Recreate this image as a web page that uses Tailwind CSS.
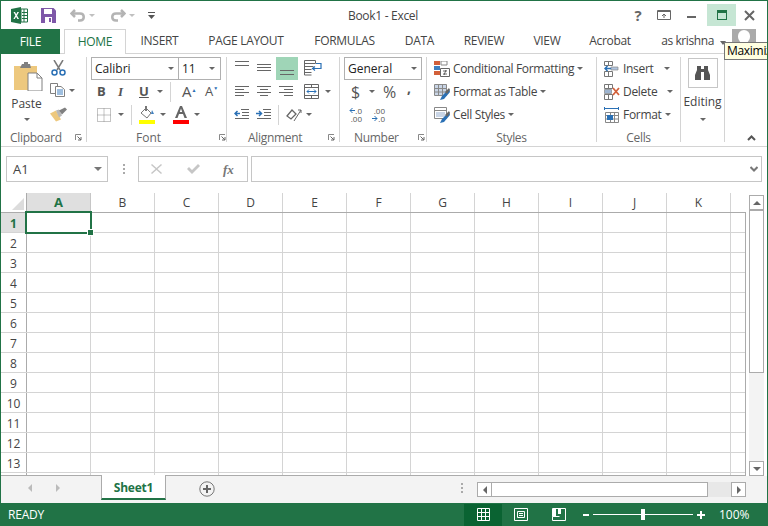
<!DOCTYPE html>
<html lang="en">
<head>
<meta charset="UTF-8">
<title>Book1 - Excel</title>
<script src="https://cdn.jsdelivr.net/npm/@tailwindcss/browser@4"></script>
</head>
<body class="m-0 overflow-hidden bg-white">
<div class="relative flex flex-col w-[768px] h-[526px] overflow-hidden bg-white text-[#444] text-[12px] leading-none font-['Open_Sans','Noto_Sans',sans-serif] border-t border-l border-r border-[#217346]">

  <!-- title bar -->
  <div class="flex items-center h-[28px] shrink-0">
    <svg class="ml-[10px] w-[17px] h-[17px]" viewBox="0 0 17 17"><path d="M0 2 10 0v17L0 15z" fill="#217346"/><path d="M10 2h6.500v13H10z" fill="#fff" stroke="#217346"/><path d="M11 5.500h5M11 8.500h5M11 11.500h5M13 2v13" stroke="#217346"/><path d="M2.500 5 4 5l1.200 2.200L6.400 5H8L6 8.500 8 12H6.400L5.100 9.700 3.800 12H2.400l2-3.500z" fill="#fff"/></svg>
    <svg class="ml-[13px] w-[15px] h-[15px]" viewBox="0 0 15 15"><path d="M0 0h12.500L15 2.500V15H0z" fill="#7e57a8"/><path d="M3 1h8v5H3z" fill="#fff"/><path d="M4 9h7v6H4z" fill="#fff"/><path d="M8 10h2v4H8z" fill="#7e57a8"/></svg>
    <svg class="ml-[14px] w-[16px] h-[14px]" viewBox="0 0 16 14" fill="none"><path d="M5 2 1.500 5.500 5 9" stroke="#b4b4b4" stroke-width="2.500"/><path d="M2 5.500h8c5 0 5 7 0 7H8" stroke="#b4b4b4" stroke-width="2.500"/></svg>
    <span class="ml-[3px] w-0 h-0 border-x-[3px] border-x-transparent border-t-[3px] border-t-[#c0c0c0]"></span>
    <svg class="ml-[15px] w-[16px] h-[14px]" viewBox="0 0 16 14" fill="none"><path d="M11 2l3.500 3.500L11 9" stroke="#b4b4b4" stroke-width="2.500"/><path d="M14 5.500H6c-5 0-5 7 0 7h2" stroke="#b4b4b4" stroke-width="2.500"/></svg>
    <span class="ml-[3px] w-0 h-0 border-x-[3px] border-x-transparent border-t-[3px] border-t-[#c0c0c0]"></span>
    <svg class="ml-[13px] w-[7px] h-[7px] mt-[1px]" viewBox="0 0 7 7"><path d="M0 0h7v1H0zM0 3h7L3.500 7z" fill="#555"/></svg>
    <span class="ml-[193px] mt-[2px] w-[70px] text-center whitespace-nowrap tracking-[-0.3px]">Book1 - Excel</span>
    <span class="ml-[215px] w-[10px] text-center text-[15px] font-bold text-[#666]">?</span>
    <svg class="ml-[14px] w-[14px] h-[10px]" viewBox="0 0 14 10" fill="none"><path d="M.5.500h13v9H.5z" stroke="#666"/><path d="M1 1.500h12" stroke="#666"/><path d="M7 8V4M5 6l2-2 2 2" stroke="#666"/></svg>
    <span class="ml-[16px] w-[9px] h-[2px] mt-[3px] bg-[#666]"></span>
    <div class="ml-[11px] flex items-center justify-center w-[29px] h-[22px] bg-[#c6e6d4]">
      <span class="w-[10px] h-[10px] border border-[#217346] border-t-[3px]"></span>
    </div>
    <svg class="ml-[8px] w-[11px] h-[11px]" viewBox="0 0 11 11"><path d="M1 1l9 9M10 1l-9 9" stroke="#666" stroke-width="2"/></svg>
  </div>

  <!-- tabs -->
  <div class="relative flex h-[25px] shrink-0 border-b border-[#d4d4d4] tracking-[-0.3px]">
    <div class="flex items-center justify-center w-[59px] h-[25px] bg-[#217346] text-white">FILE</div>
    <div class="flex items-center justify-center ml-[4px] w-[62px] h-[25px] bg-white border border-b-0 border-[#d4d4d4] text-[#217346]">HOME</div>
    <div class="flex items-center justify-center w-[67px]">INSERT</div>
    <div class="flex items-center justify-center w-[106px]">PAGE LAYOUT</div>
    <div class="flex items-center justify-center w-[91px]">FORMULAS</div>
    <div class="flex items-center justify-center w-[59px]">DATA</div>
    <div class="flex items-center justify-center w-[70px]">REVIEW</div>
    <div class="flex items-center justify-center w-[56px]">VIEW</div>
    <div class="flex items-center justify-center w-[70px]">Acrobat</div>
    <div class="flex items-center justify-end w-[69px] whitespace-nowrap tracking-[-0.4px]">as krishna</div>
    <span class="ml-[6px] mt-[12px] w-0 h-0 border-x-[3px] border-x-transparent border-t-[4px] border-t-[#666]"></span>
    <div class="ml-[6px] w-[24px] h-[24px] bg-[#aaa] flex justify-center overflow-hidden"><span class="mt-[1px] w-[12px] h-[13px] rounded-full bg-white"></span></div>
  </div>

  <!-- ribbon -->
  <div class="flex h-[93px] shrink-0 border-b border-[#d4d4d4]">

    <!-- clipboard -->
    <div class="flex flex-col w-[86px] h-[85px] mt-[3px] border-r border-[#d4d4d4]">
      <div class="flex h-[76px]">
        <div class="flex flex-col items-center w-[47px] pl-[4px]">
          <svg class="mt-[5px] ml-[3px] w-[29px] h-[29px]" viewBox="0 0 29 29"><path d="M0 4h23v24H0z" fill="#edc87e"/><path d="M8 2h2V0h4v2h2l1 4H6z" fill="#808080"/><path d="M14 11h9l5 5v13H14z" fill="#fff" stroke="#808080"/><path d="M23 11v5h5" fill="none" stroke="#808080"/></svg>
          <span class="mt-[7px]">Paste</span>
          <span class="mt-[8px] w-0 h-0 border-x-[3px] border-x-transparent border-t-[3px] border-t-[#666]"></span>
        </div>
        <div class="flex flex-col">
          <svg class="ml-[3px] mt-[3px] w-[15px] h-[16px]" viewBox="0 0 15 16" fill="none"><path d="M3 0l6 10M12 0 6 10" stroke="#7a7a7a" stroke-width="1.500"/><circle cx="3.500" cy="12.500" r="2.500" stroke="#2a70b5" stroke-width="1.500"/><circle cx="11.500" cy="12.500" r="2.500" stroke="#2a70b5" stroke-width="1.500"/></svg>
          <div class="flex items-center mt-[7px]">
            <svg class="ml-[2px] w-[15px] h-[14px]" viewBox="0 0 15 14" fill="none"><path d="M.5.500h7v10h-7z" stroke="#808080" fill="#fff"/><path d="M5.500 3.500H11l3.500 3v7h-9z" stroke="#808080" fill="#fff"/><path d="M7 7h6M7 9h6M7 11h6" stroke="#3f7fbf"/></svg>
            <span class="ml-[4px] w-0 h-0 border-x-[3px] border-x-transparent border-t-[3px] border-t-[#666]"></span>
          </div>
          <svg class="ml-[2px] mt-[10px] w-[17px] h-[15px]" viewBox="0 0 17 14"><path d="M0 6l6-3 5 9-5 2z" fill="#edc87e"/><path d="M6 3l3-1 3 6-3 2z" fill="#b8b8b8"/><path d="M9 3l6-3 2 2-5 5z" fill="#808080"/></svg>
        </div>
      </div>
      <div class="flex items-center h-[9px] text-[#666] tracking-[-0.3px]"><span class="ml-[9px] w-[65px]">Clipboard</span>
        <svg class="w-[7px] h-[7px]" viewBox="0 0 7 7" fill="none"><path d="M.5 6V.500H6" stroke="#888"/><path d="M2.500 2.500 6 6M6 3v3H3" stroke="#666"/></svg>
      </div>
    </div>

    <!-- font -->
    <div class="flex flex-col w-[140px] h-[85px] mt-[3px] border-r border-[#d4d4d4]">
      <div class="h-[76px] pl-[4px]">
        <div class="flex h-[23px]">
          <div class="flex items-center justify-between w-[88px] h-[23px] px-[3px] border border-[#b0b0b0] text-[#222] pr-[4px]"><span>Calibri</span><span class="w-0 h-0 border-x-[3px] border-x-transparent border-t-[3px] border-t-[#666]"></span></div>
          <div class="flex items-center justify-between w-[43px] h-[23px] -ml-px px-[3px] pr-[5px] border border-[#b0b0b0] text-[#222]"><span>11</span><span class="w-0 h-0 border-x-[3px] border-x-transparent border-t-[3px] border-t-[#666]"></span></div>
        </div>
        <div class="flex items-center h-[23px] text-[#555]">
          <span class="ml-[6px] w-[10px] text-[13px] font-bold">B</span>
          <span class="ml-[11px] w-[10px] text-[13px] font-bold italic font-['Liberation_Serif',serif]">I</span>
          <span class="ml-[11px] w-[12px] text-[13px] font-bold underline">U</span>
          <span class="ml-[6px] w-0 h-0 border-x-[3px] border-x-transparent border-t-[3px] border-t-[#666]"></span>
          <span class="ml-[7px] w-px h-[20px] bg-[#d4d4d4]"></span>
          <span class="ml-[11px] w-[17px] text-[15px] whitespace-nowrap">A<span class="relative -top-[5px] text-[5px] text-[#2a70b5]">▲</span></span>
          <span class="ml-[6px] w-[15px] text-[13px] whitespace-nowrap">A<span class="relative -top-[6px] text-[5px] text-[#2a70b5]">▼</span></span>
        </div>
        <div class="flex items-center h-[23px]">
          <svg class="ml-[6px] w-[14px] h-[14px]" viewBox="0 0 14 14" fill="none"><path d="M.5.500h13v13H.5zM7 .5v13M.5 7h13" stroke="#888" stroke-dasharray="1 1"/></svg>
          <span class="ml-[7px] w-0 h-0 border-x-[3px] border-x-transparent border-t-[3px] border-t-[#666]"></span>
          <span class="ml-[7px] w-px h-[20px] bg-[#d4d4d4]"></span>
          <svg class="ml-[7px] w-[16px] h-[19px]" viewBox="0 0 16 19"><path d="M2 8l5-5 5 5-4 5z" fill="#fff" stroke="#777"/><path d="M6 1h2v5H6z" fill="#777"/><path d="M13 5l2 4h-3z" fill="#3f7fbf"/><path d="M0 15h16v4H0z" fill="#ffff00"/></svg>
          <span class="ml-[5px] w-0 h-0 border-x-[3px] border-x-transparent border-t-[3px] border-t-[#666]"></span>
          <svg class="ml-[7px] w-[16px] h-[19px]" viewBox="0 0 16 19"><path d="M2 13 7 1h2l5 12h-2.500L10 9H6l-1.500 4zM6.800 7h2.400L8 3.500z" fill="#666"/><path d="M0 15h16v4H0z" fill="#ff0000"/></svg>
          <span class="ml-[5px] w-0 h-0 border-x-[3px] border-x-transparent border-t-[3px] border-t-[#666]"></span>
        </div>
      </div>
      <div class="flex items-center h-[9px] text-[#666]"><span class="ml-[49px] w-[83px]">Font</span>
        <svg class="w-[7px] h-[7px]" viewBox="0 0 7 7" fill="none"><path d="M.5 6V.500H6" stroke="#888"/><path d="M2.500 2.500 6 6M6 3v3H3" stroke="#666"/></svg>
      </div>
    </div>

    <!-- alignment -->
    <div class="flex flex-col w-[113px] h-[85px] mt-[3px] border-r border-[#d4d4d4]">
      <div class="h-[76px]">
        <div class="flex h-[23px]">
          <svg class="ml-[7px] mt-[3px] w-[16px] h-[14px]" viewBox="0 0 16 14" fill="none"><path d="M1 1.500h14M1 5.500h14" stroke="#666"/></svg>
          <svg class="ml-[6px] mt-[3px] w-[16px] h-[14px]" viewBox="0 0 16 14" fill="none"><path d="M1 4.500h14M1 7.500h14M1 10.500h14" stroke="#666"/></svg>
          <div class="ml-[4px] w-[22px] h-[23px] bg-[#9fd5b7]"><svg class="ml-[3px] mt-[3px] w-[16px] h-[18px]" viewBox="0 0 16 18" fill="none"><path d="M1 10.500h14M1 14.500h14" stroke="#666"/></svg></div>
          <svg class="ml-[6px] mt-[2px] w-[18px] h-[17px]" viewBox="0 0 18 17" fill="none"><path d="M.5 1.500h11v3H.5zM.5 7.500h9M.5 10.500h7M.5 13.500h7" stroke="#666"/><path d="M.5 4v12h7" stroke="#666"/><path d="M12 4.500h5v5h-8M11 7.500 8.500 9.500l2.500 2" stroke="#2a70b5" stroke-width="1.200"/></svg>
        </div>
        <div class="flex h-[23px] items-center">
          <svg class="ml-[7px] w-[16px] h-[13px]" viewBox="0 0 16 13" fill="none"><path d="M1 1.500h14M1 4.500h9M1 7.500h14M1 10.500h9" stroke="#666"/></svg>
          <svg class="ml-[6px] w-[16px] h-[13px]" viewBox="0 0 16 13" fill="none"><path d="M1 1.500h14M4 4.500h8M1 7.500h14M4 10.500h8" stroke="#666"/></svg>
          <svg class="ml-[6px] w-[16px] h-[13px]" viewBox="0 0 16 13" fill="none"><path d="M1 1.500h14M6 4.500h9M1 7.500h14M6 10.500h9" stroke="#666"/></svg>
          <svg class="ml-[10px] w-[15px] h-[15px]" viewBox="0 0 15 15" fill="none"><path d="M.5.500h14v14H.5zM.5 3.500h14M.5 11.500h14M7.500.5v3M7.500 11.500v3" stroke="#666"/><path d="M3 7.500h9M5 5.500l-2 2 2 2M10 5.500l2 2-2 2" stroke="#2a70b5"/></svg>
          <span class="ml-[6px] w-0 h-0 border-x-[3px] border-x-transparent border-t-[3px] border-t-[#666]"></span>
        </div>
        <div class="flex h-[23px] items-center">
          <svg class="ml-[7px] w-[16px] h-[13px]" viewBox="0 0 16 13" fill="none"><path d="M7 1.500h8M8 4.500h7M8 7.500h7M1 10.500h14" stroke="#666"/><path d="M1 5.500h5M3.500 3l-2.500 2.500 2.500 2.500" stroke="#2a70b5" stroke-width="1.500"/></svg>
          <svg class="ml-[6px] w-[16px] h-[13px]" viewBox="0 0 16 13" fill="none"><path d="M7 1.500h8M8 4.500h7M8 7.500h7M1 10.500h14" stroke="#666"/><path d="M0 5.500h5M3 3l2.500 2.500L3 8" stroke="#2a70b5" stroke-width="1.500"/></svg>
          <span class="ml-[6px] w-px h-[20px] bg-[#d4d4d4]"></span>
          <svg class="ml-[7px] w-[17px] h-[15px]" viewBox="0 0 17 15" fill="none"><path d="M1 9 6 3l4 4-5 5z" stroke="#666" stroke-width="1.300"/><path d="M8 14 15 3M12 3h3v3" stroke="#666"/></svg>
          <span class="ml-[3px] w-0 h-0 border-x-[3px] border-x-transparent border-t-[3px] border-t-[#666]"></span>
        </div>
      </div>
      <div class="flex items-center h-[9px] text-[#666] tracking-[-0.3px]"><span class="ml-[21px] w-[80px]">Alignment</span>
        <svg class="w-[7px] h-[7px]" viewBox="0 0 7 7" fill="none"><path d="M.5 6V.500H6" stroke="#888"/><path d="M2.500 2.500 6 6M6 3v3H3" stroke="#666"/></svg>
      </div>
    </div>

    <!-- number -->
    <div class="flex flex-col w-[87px] h-[85px] mt-[3px] border-r border-[#d4d4d4]">
      <div class="h-[76px] pl-[4px]">
        <div class="flex items-center justify-between w-[78px] h-[23px] px-[3px] pr-[4px] border border-[#b0b0b0] text-[#222]"><span>General</span><span class="w-0 h-0 border-x-[3px] border-x-transparent border-t-[3px] border-t-[#666]"></span></div>
        <div class="flex items-center h-[23px] text-[#555]">
          <span class="ml-[7px] w-[9px] text-[16px]">$</span>
          <span class="ml-[9px] w-0 h-0 border-x-[3px] border-x-transparent border-t-[3px] border-t-[#666]"></span>
          <span class="ml-[8px] w-[14px] text-[16px]">%</span>
          <span class="ml-[10px] -mt-[8px] w-[6px] text-[14px] font-bold">,</span>
        </div>
        <div class="flex items-center h-[23px] text-[8px] leading-[8px] text-[#555]">
          <div class="flex flex-col items-end ml-[2px] w-[16px]">
            <div class="flex items-center">
              <svg class="w-[6px] h-[7px]" viewBox="0 0 6 7" fill="none"><path d="M1 3.500h5M3.500 1 1 3.500 3.500 6" stroke="#2a70b5"/></svg>
              <span>.0</span>
            </div>
            <span>.00</span>
          </div>
          <div class="flex flex-col items-end ml-[7px] w-[16px]">
            <span>.00</span>
            <div class="flex items-center">
              <svg class="w-[6px] h-[7px]" viewBox="0 0 6 7" fill="none"><path d="M0 3.500h5M2.500 1 5 3.500 2.500 6" stroke="#2a70b5"/></svg>
              <span>.0</span>
            </div>
          </div>
        </div>
      </div>
      <div class="flex items-center h-[9px] text-[#666] tracking-[-0.3px]"><span class="ml-[14px] w-[64px]">Number</span>
        <svg class="w-[7px] h-[7px]" viewBox="0 0 7 7" fill="none"><path d="M.5 6V.500H6" stroke="#888"/><path d="M2.500 2.500 6 6M6 3v3H3" stroke="#666"/></svg>
      </div>
    </div>

    <!-- styles -->
    <div class="flex flex-col w-[170px] h-[85px] mt-[3px] border-r border-[#d4d4d4] tracking-[-0.35px]">
      <div class="h-[76px] pl-[7px]">
        <div class="flex items-center h-[23px]">
          <svg class="w-[16px] h-[16px] shrink-0" viewBox="0 0 16 16"><path d="M0 0h6v4H0z" fill="#d2603a"/><path d="M0 5h6v4H0z" fill="#3f7fbf"/><path d="M0 10h6v4H0z" fill="#d2603a"/><path d="M7 0h6v4H7z" fill="none" stroke="#888"/><path d="M6.500 7.500h9v8h-9z" fill="#fff" stroke="#666"/><path d="M9 10h4M9 13h4M12 9l-2 5" stroke="#444" stroke-width=".8"/></svg>
          <span class="ml-[3px] whitespace-nowrap">Conditional Formatting</span>
          <span class="ml-[3px] w-0 h-0 border-x-[3px] border-x-transparent border-t-[3px] border-t-[#666]"></span>
        </div>
        <div class="flex items-center h-[23px]">
          <svg class="w-[16px] h-[16px] shrink-0" viewBox="0 0 16 16" fill="none"><path d="M.5.500h12v11H.5z" fill="#c9d5e6" stroke="#888"/><path d="M4.500.5v11M8.500.5v11M.5 4.500h12M.5 8h12" stroke="#888"/><path d="M15 5 8 12l-2 4 4-1 6-7z" fill="#2a70b5"/><path d="M15 4l-4 4 2 2 3-4z" fill="#666"/></svg>
          <span class="ml-[3px] whitespace-nowrap">Format as Table</span>
          <span class="ml-[3px] w-0 h-0 border-x-[3px] border-x-transparent border-t-[3px] border-t-[#666]"></span>
        </div>
        <div class="flex items-center h-[23px]">
          <svg class="w-[16px] h-[16px] shrink-0" viewBox="0 0 16 16" fill="none"><path d="M.5.500h12v11H.5z" fill="#fff" stroke="#888"/><path d="M.5 3.500h12" stroke="#888"/><path d="M2 5h9v5H2z" fill="#c9d5e6"/><path d="M15 5 8 12l-2 4 4-1 6-7z" fill="#2a70b5"/><path d="M15 4l-4 4 2 2 3-4z" fill="#666"/></svg>
          <span class="ml-[3px] whitespace-nowrap">Cell Styles</span>
          <span class="ml-[3px] w-0 h-0 border-x-[3px] border-x-transparent border-t-[3px] border-t-[#666]"></span>
        </div>
      </div>
      <div class="h-[9px] flex items-center justify-center text-[#666]">Styles</div>
    </div>

    <!-- cells -->
    <div class="flex flex-col w-[84px] h-[85px] mt-[3px] border-r border-[#d4d4d4] tracking-[-0.3px]">
      <div class="h-[76px] pl-[7px]">
        <div class="flex items-center h-[23px]">
          <svg class="w-[16px] h-[16px] shrink-0" viewBox="0 0 16 16" fill="none"><path d="M.5.500h8v4h-8zM.5 10.500h8v5h-8zM4.500.5v4M4.500 10.500v5" stroke="#777"/><path d="M7 6h7v3H7z" fill="#b0c4de" stroke="#888" stroke-width=".7"/><path d="M7 7.500H1M3.500 5 1 7.500 3.500 10" stroke="#2a70b5" stroke-width="1.500"/></svg>
          <span class="ml-[3px]">Insert</span>
          <span class="ml-[10px] w-0 h-0 border-x-[3px] border-x-transparent border-t-[3px] border-t-[#666]"></span>
        </div>
        <div class="flex items-center h-[23px]">
          <svg class="w-[16px] h-[16px] shrink-0" viewBox="0 0 16 16" fill="none"><path d="M.5.500h8v4h-8zM.5 10.500h8v5h-8zM4.500.5v4M4.500 10.500v5" stroke="#777"/><path d="M.5 5.500h7v4h-7z" fill="#9db4d0" stroke="#888" stroke-width=".7"/><path d="M9 4l6 7M15 4l-6 7" stroke="#d2603a" stroke-width="1.800"/></svg>
          <span class="ml-[3px]">Delete</span>
          <span class="ml-[10px] w-0 h-0 border-x-[3px] border-x-transparent border-t-[3px] border-t-[#666]"></span>
        </div>
        <div class="flex items-center h-[23px]">
          <svg class="w-[16px] h-[16px] shrink-0" viewBox="0 0 16 16" fill="none"><path d="M.5 1.500h14M.5 0v3M14.500 0v3" stroke="#2a70b5"/><path d="M1.500 5.500h13v10h-13zM6.500 5.500v10M10.500 5.500v10M1.500 8.500h13M1.500 12h13" stroke="#888"/><path d="M3 8h6v5H3z" fill="#2a70b5"/></svg>
          <span class="ml-[3px]">Format</span>
          <span class="ml-[3px] w-0 h-0 border-x-[3px] border-x-transparent border-t-[3px] border-t-[#666]"></span>
        </div>
      </div>
      <div class="h-[9px] flex items-center justify-center text-[#666]">Cells</div>
    </div>

    <!-- editing -->
    <div class="flex flex-col items-center w-[44px] h-[85px] mt-[3px] border-r border-[#d4d4d4]">
      <div class="flex items-center justify-center mt-[1px] w-[30px] h-[30px] border border-[#c6c6c6]">
        <svg class="w-[15px] h-[14px]" viewBox="0 0 15 14"><path d="M2 0h4v3h3V0h4v4l2 5v5H9V6H6v8H0V9l2-5z" fill="#555"/></svg>
      </div>
      <span class="mt-[8px]">Editing</span>
      <span class="mt-[10px] w-0 h-0 border-x-[3px] border-x-transparent border-t-[3px] border-t-[#666]"></span>
    </div>
    <svg class="ml-[22px] mt-[81px] w-[9px] h-[6px]" viewBox="0 0 9 6" fill="none"><path d="M1 5l3.500-3.500L8 5" stroke="#555" stroke-width="2"/></svg>
  </div>

  <!-- formula bar -->
  <div class="flex h-[46px] shrink-0 pt-[9px] items-start">
    <div class="flex items-center justify-between ml-[5px] w-[102px] h-[26px] border border-[#c6c6c6] pl-[6px] pr-[5px] text-[13px]"><span>A1</span><span class="w-0 h-0 border-x-[4px] border-x-transparent border-t-[4px] border-t-[#777]"></span></div>
    <div class="flex flex-col gap-[2px] ml-[15px] mt-[8px]"><span class="w-[2px] h-[2px] bg-[#aaa]"></span><span class="w-[2px] h-[2px] bg-[#aaa]"></span><span class="w-[2px] h-[2px] bg-[#aaa]"></span></div>
    <div class="flex items-center ml-[13px] w-[110px] h-[26px] border border-[#c6c6c6]">
      <svg class="ml-[12px] w-[11px] h-[10px]" viewBox="0 0 11 10"><path d="M1 0l4.500 4L10 0l1 1-4.500 4L11 9l-1 1-4.500-4L1 10 0 9l4.500-4L0 1z" fill="#c6c6c6"/></svg>
      <svg class="ml-[25px] w-[13px] h-[10px]" viewBox="0 0 13 10"><path d="M0 5l2-2 3 3 6-6 2 2-8 8z" fill="#c6c6c6"/></svg>
      <span class="ml-[23px] text-[13px] italic font-bold text-[#777] font-['Liberation_Serif',serif]">fx</span>
    </div>
    <div class="flex items-center justify-end ml-[3px] w-[511px] h-[26px] border border-[#c6c6c6] pr-[3px]">
      <svg class="w-[8px] h-[6px]" viewBox="0 0 8 6" fill="none"><path d="M.5 1 4 4.500 7.500 1" stroke="#777" stroke-width="2"/></svg>
    </div>
  </div>

  <!-- sheet area -->
  <div class="flex h-[283px] shrink-0">
    <div class="w-[745px] h-[283px] overflow-hidden border-b border-[#ababab]">
      <div class="flex h-[20px] border-b border-[#ababab]">
        <div class="relative w-[26px] shrink-0 border-r border-[#ababab]"><span class="absolute right-[2px] bottom-[2px] w-0 h-0 border-l-[12px] border-l-transparent border-b-[12px] border-b-[#dcdcdc]"></span></div>
        <div class="flex items-center justify-center w-[64px] shrink-0 bg-[#dfdfdf] border-r border-[#c6c6c6] text-[#217346] font-bold text-[13px]">A</div>
        <div class="flex items-center justify-center w-[64px] shrink-0 border-r border-[#d4d4d4]">B</div>
        <div class="flex items-center justify-center w-[64px] shrink-0 border-r border-[#d4d4d4]">C</div>
        <div class="flex items-center justify-center w-[64px] shrink-0 border-r border-[#d4d4d4]">D</div>
        <div class="flex items-center justify-center w-[64px] shrink-0 border-r border-[#d4d4d4]">E</div>
        <div class="flex items-center justify-center w-[64px] shrink-0 border-r border-[#d4d4d4]">F</div>
        <div class="flex items-center justify-center w-[64px] shrink-0 border-r border-[#d4d4d4]">G</div>
        <div class="flex items-center justify-center w-[64px] shrink-0 border-r border-[#d4d4d4]">H</div>
        <div class="flex items-center justify-center w-[64px] shrink-0 border-r border-[#d4d4d4]">I</div>
        <div class="flex items-center justify-center w-[64px] shrink-0 border-r border-[#d4d4d4]">J</div>
        <div class="flex items-center justify-center w-[64px] shrink-0 border-r border-[#d4d4d4]">K</div>
      </div>
      <div id="rows" class="border-r border-[#ababab] h-[262px] overflow-hidden"></div>
    </div>
    <!-- vertical scrollbar -->
    <div class="flex flex-col w-[21px] h-[283px] pl-[3px] pt-[2px]">
      <div class="flex items-center justify-center w-[15px] h-[15px] shrink-0 border border-[#ababab] bg-white"><span class="w-0 h-0 border-x-[4px] border-x-transparent border-b-[4px] border-b-[#666]"></span></div>
      <div class="w-[15px] h-[163px] shrink-0 border border-[#ababab] bg-white"></div>
      <div class="w-[15px] h-[88px] shrink-0 bg-[#f3f3f3]"></div>
      <div class="flex items-center justify-center w-[15px] h-[15px] shrink-0 border border-[#ababab] bg-white"><span class="w-0 h-0 border-x-[4px] border-x-transparent border-t-[4px] border-t-[#666]"></span></div>
    </div>
  </div>

  <!-- sheet tabs -->
  <div class="relative flex h-[27px] shrink-0 bg-[#f3f3f3]">
    <span class="ml-[27px] mt-[8px] h-0 w-0 border-y-[4px] border-y-transparent border-r-[4px] border-r-[#bbb]"></span>
    <span class="ml-[24px] mt-[8px] h-0 w-0 border-y-[4px] border-y-transparent border-l-[4px] border-l-[#bbb]"></span>
    <div class="flex items-center justify-center ml-[41px] -mt-px pt-[2px] w-[65px] h-[25px] bg-white border-x border-[#ababab] border-b-2 border-b-[#217346] text-[#217346] font-bold tracking-[-0.2px]">Sheet1</div>
    <svg class="ml-[33px] mt-[5px] w-[16px] h-[16px]" viewBox="0 0 16 16" fill="none"><circle cx="8" cy="8" r="7.200" stroke="#777"/><path d="M8 4v8M4 8h8" stroke="#666" stroke-width="2"/></svg>
    <div class="ml-[246px] mt-[7px] flex flex-col gap-[2px]"><span class="w-[2px] h-[2px] bg-[#aaa]"></span><span class="w-[2px] h-[2px] bg-[#aaa]"></span><span class="w-[2px] h-[2px] bg-[#aaa]"></span></div>
    <!-- horizontal scrollbar -->
    <div class="flex ml-[14px] mt-[6px] h-[15px]">
      <div class="flex items-center justify-center w-[15px] border border-[#ababab] bg-white"><span class="w-0 h-0 border-y-[4px] border-y-transparent border-r-[4px] border-r-[#666]"></span></div>
      <div class="w-[217px] -ml-px border border-[#ababab] bg-white"></div>
      <div class="w-[23px] bg-[#e8e8e8]"></div>
      <div class="flex items-center justify-center w-[15px] border border-[#ababab] bg-white"><span class="w-0 h-0 border-y-[4px] border-y-transparent border-l-[4px] border-l-[#666]"></span></div>
    </div>
  </div>

  <!-- status bar -->
  <div class="flex items-center h-[23px] shrink-0 bg-[#217346] text-white -mx-px pl-[8px]">
    <span class="w-[456px] tracking-[-0.2px]">READY</span>
    <div class="flex items-center justify-center w-[38px] h-[22px] bg-[#0a6332]">
      <svg class="w-[13px] h-[13px]" viewBox="0 0 13 13" fill="none"><path d="M.5.500h12v12H.5zM4.500.5v12M8.500.5v12M.5 4.500h12M.5 8.500h12" stroke="#fff"/></svg>
    </div>
    <svg class="ml-[12px] w-[14px] h-[13px]" viewBox="0 0 14 13" fill="none"><path d="M.5.500h13v12H.5z" stroke="#fff"/><path d="M3.500 3.500h7v6h-7z" stroke="#fff"/><path d="M5 5.500h4M5 7.500h4" stroke="#fff"/></svg>
    <svg class="ml-[24px] w-[14px] h-[13px]" viewBox="0 0 14 13" fill="none"><path d="M.5 8.500V.500h13v12H.5V8.500h7" stroke="#fff"/><path d="M1 1h3v7H1zM6 1h3v5H6z" fill="#fff"/></svg>
    <span class="ml-[17px] w-[6px] h-[2px] bg-white"></span>
    <div class="relative flex items-center ml-[4px] w-[100px] h-[1px] bg-white"><span class="absolute left-[48px] -top-[5px] w-[4px] h-[11px] bg-white"></span></div>
    <svg class="ml-[4px] w-[8px] h-[8px]" viewBox="0 0 8 8"><path d="M3 0h2v3h3v2H5v3H3V5H0V3h3z" fill="#fff"/></svg>
    <span class="ml-[14px]">100%</span>
  </div>

  <!-- selected cell -->
  <div class="absolute left-[24px] top-[210px] w-[67px] h-[23px] border-2 border-[#217346]">
    <span class="absolute -right-[4px] -bottom-[4px] w-[7px] h-[7px] bg-[#217346] border border-white"></span>
  </div>

  <!-- tooltip -->
  <div class="absolute left-[723px] top-[41px] w-[60px] h-[18px] pl-[2px] flex items-center bg-[#ffffe1] border border-[#767676] text-[#000] whitespace-nowrap tracking-[-0.3px]">Maximize</div>
</div>

<script>
  const rows = document.getElementById('rows')
  const headCls = 'flex items-center justify-center pt-[2px] w-[26px] shrink-0 border-r border-[#ababab]'
  const cellCls = 'w-[64px] shrink-0 border-r border-[#d4d4d4]'
  for (let r = 1; r <= 14; r++) {
    const row = document.createElement('div')
    row.className = 'flex h-[20px] border-b border-[#d4d4d4]'
    const head = document.createElement('div')
    head.className = headCls
    // row 14 is only a sliver at the bottom, no number shows
    if (r < 14) head.textContent = r
    if (r === 1) head.className = headCls + ' bg-[#dfdfdf] text-[#217346] font-bold'
    row.appendChild(head)
    for (let c = 0; c < 11; c++) {
      const cell = document.createElement('div')
      cell.className = cellCls
      row.appendChild(cell)
    }
    rows.appendChild(row)
  }
</script>
</body>
</html>
